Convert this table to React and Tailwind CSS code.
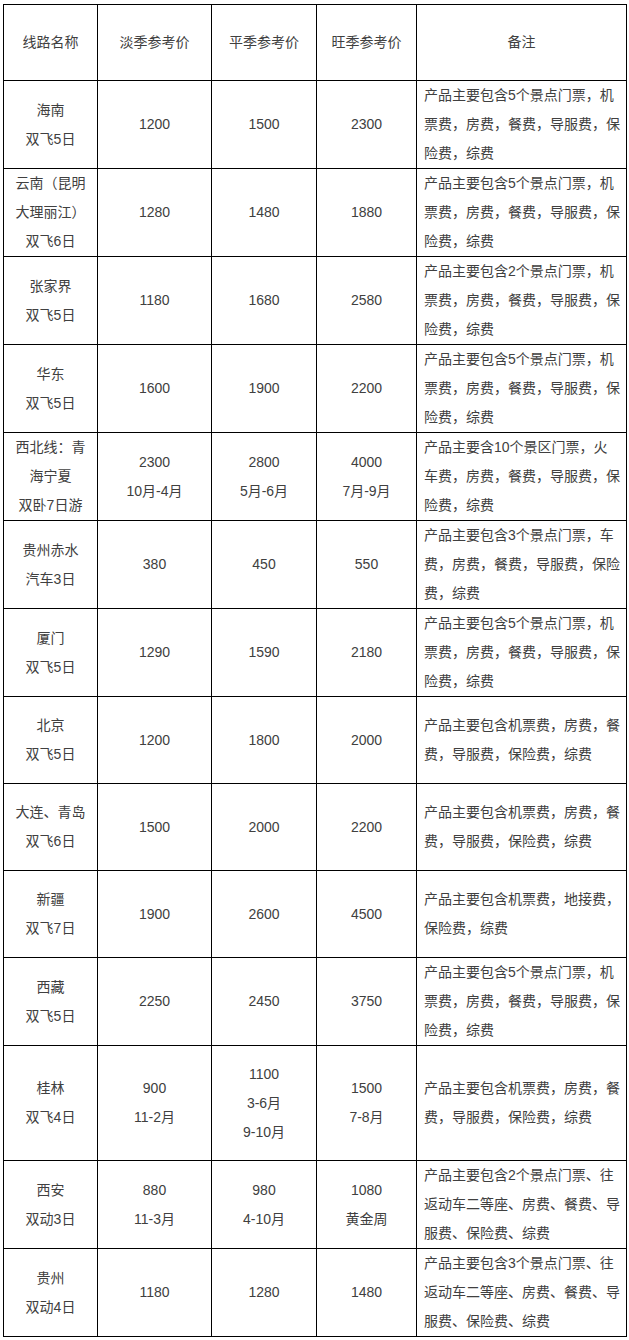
import React from 'react';

const A = ['产品主要包含5个景点门票，机', '票费，房费，餐费，导服费，保', '险费，综费'];
const B = ['产品主要包含机票费，房费，餐', '费，导服费，保险费，综费'];

const rows = [
  { h: 'h-[88px]', name: ['海南', '双飞5日'], p: [['1200'], ['1500'], ['2300']], note: A },
  { h: 'h-[88px]', name: ['云南（昆明', '大理丽江）', '双飞6日'], p: [['1280'], ['1480'], ['1880']], note: A },
  {
    h: 'h-[88px]',
    name: ['张家界', '双飞5日'],
    p: [['1180'], ['1680'], ['2580']],
    note: ['产品主要包含2个景点门票，机', '票费，房费，餐费，导服费，保', '险费，综费'],
  },
  { h: 'h-[88px]', name: ['华东', '双飞5日'], p: [['1600'], ['1900'], ['2200']], note: A },
  {
    h: 'h-[88px]',
    name: ['西北线：青', '海宁夏', '双卧7日游'],
    p: [['2300', '10月-4月'], ['2800', '5月-6月'], ['4000', '7月-9月']],
    note: ['产品主要含10个景区门票，火', '车费，房费，餐费，导服费，保', '险费，综费'],
  },
  {
    h: 'h-[88px]',
    name: ['贵州赤水', '汽车3日'],
    p: [['380'], ['450'], ['550']],
    note: ['产品主要包含3个景点门票，车', '费，房费，餐费，导服费，保险', '费，综费'],
  },
  { h: 'h-[88px]', name: ['厦门', '双飞5日'], p: [['1290'], ['1590'], ['2180']], note: A },
  { h: 'h-[87px]', name: ['北京', '双飞5日'], p: [['1200'], ['1800'], ['2000']], note: B },
  { h: 'h-[87px]', name: ['大连、青岛', '双飞6日'], p: [['1500'], ['2000'], ['2200']], note: B },
  {
    h: 'h-[87px]',
    name: ['新疆', '双飞7日'],
    p: [['1900'], ['2600'], ['4500']],
    note: ['产品主要包含机票费，地接费，', '保险费，综费'],
  },
  { h: 'h-[88px]', name: ['西藏', '双飞5日'], p: [['2250'], ['2450'], ['3750']], note: A },
  {
    h: 'h-[115px]',
    name: ['桂林', '双飞4日'],
    p: [['900', '11-2月'], ['1100', '3-6月', '9-10月'], ['1500', '7-8月']],
    note: B,
  },
  {
    h: 'h-[88px]',
    name: ['西安', '双动3日'],
    p: [['880', '11-3月'], ['980', '4-10月'], ['1080', '黄金周']],
    note: ['产品主要包含2个景点门票、往', '返动车二等座、房费、餐费、导', '服费、保险费、综费'],
  },
  {
    h: 'h-[88px]',
    name: ['贵州', '双动4日'],
    p: [['1180'], ['1280'], ['1480']],
    note: ['产品主要包含3个景点门票、往', '返动车二等座、房费、餐费、导', '服费、保险费、综费'],
  },
];

// one table cell, lines are broken by hand like the source table
function Cell({ lines, h, left }) {
  return (
    <div
      className={`${h} border-r border-b border-black flex flex-col justify-center whitespace-nowrap ${
        left ? 'items-start pl-[7px]' : 'items-center'
      }`}
    >
      {lines.map((t, i) => (
        <div key={i}>{t}</div>
      ))}
    </div>
  );
}

export default function App() {
  const head = ['线路名称', '淡季参考价', '平季参考价', '旺季参考价', '备注'];

  return (
    <div
      className="bg-white w-[629px] h-[1340px] pt-[4px] pl-[3px] text-[14px] leading-[29px] text-[#404040]"
      style={{ fontFamily: '"Liberation Sans", "Noto Sans CJK SC", sans-serif' }}
    >
      <div className="w-[624px] border-t border-l border-black grid grid-cols-[94px_114px_105px_100px_210px]">
        {head.map((t) => (
          <Cell key={t} lines={[t]} h="h-[76px]" />
        ))}
        {rows.map((r, i) => (
          <React.Fragment key={i}>
            <Cell lines={r.name} h={r.h} />
            {r.p.map((lines, j) => (
              <Cell key={j} lines={lines} h={r.h} />
            ))}
            <Cell lines={r.note} h={r.h} left />
          </React.Fragment>
        ))}
      </div>
    </div>
  );
}
